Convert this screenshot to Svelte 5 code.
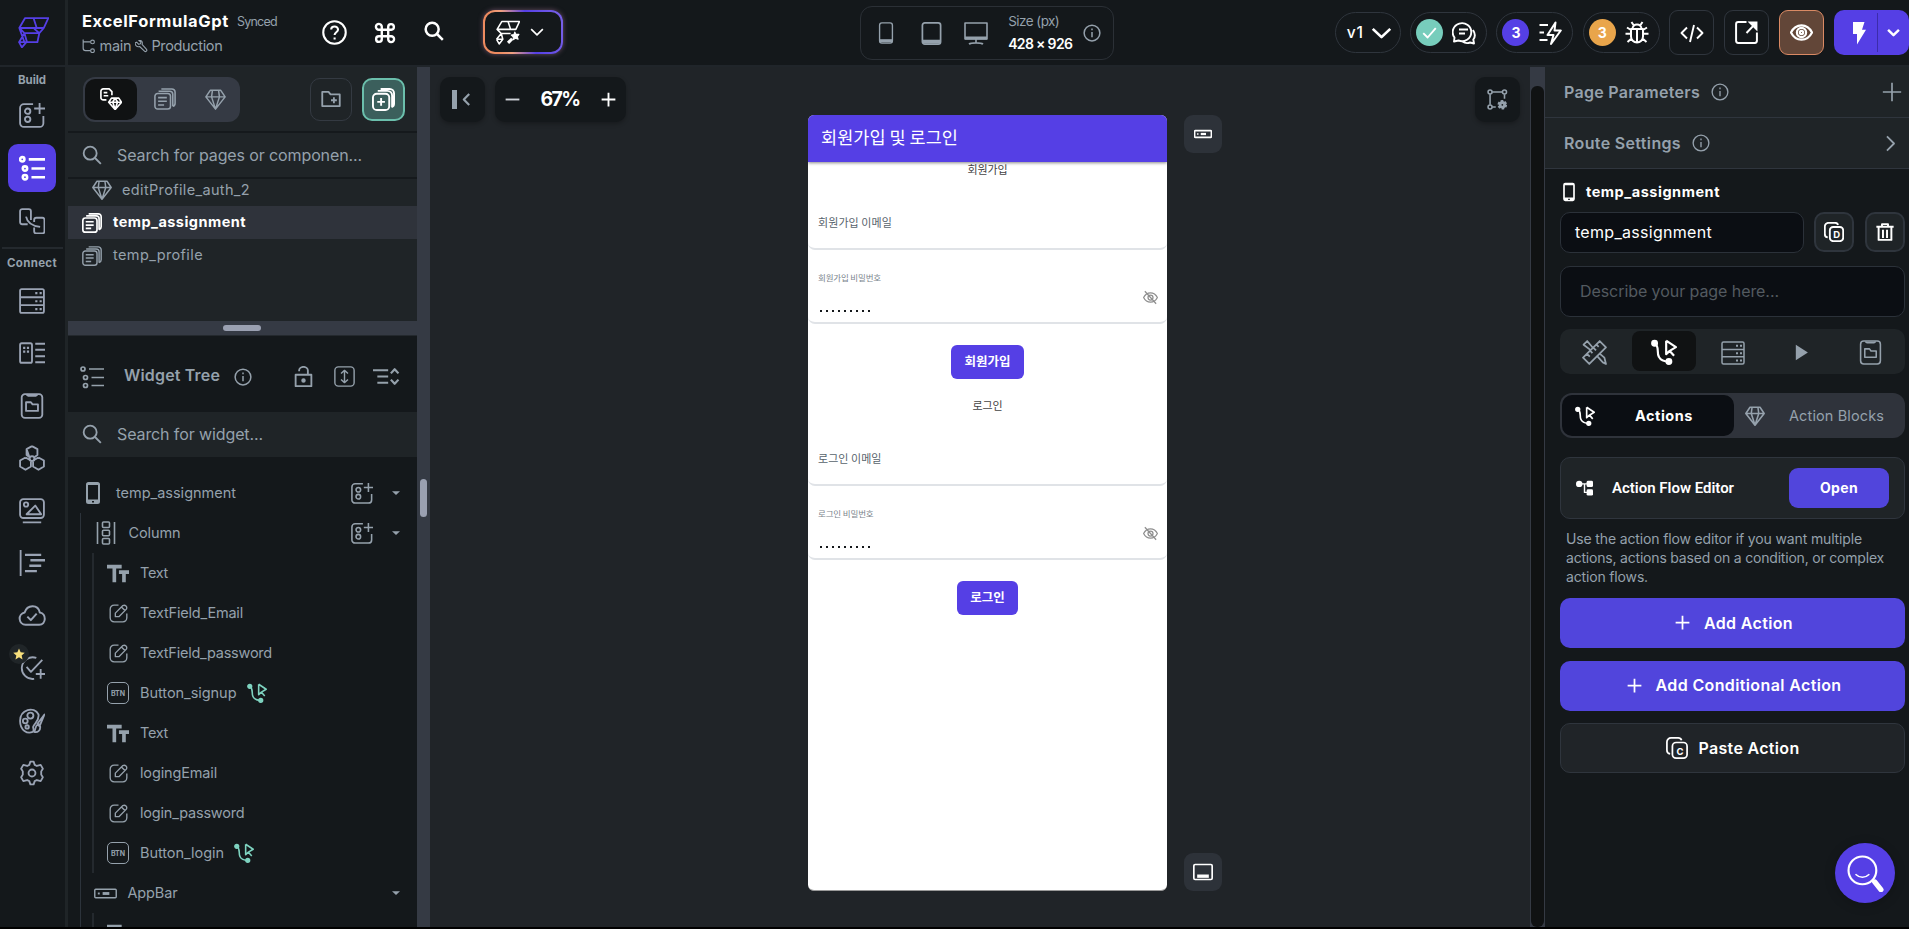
<script>
  // Spreads a label over a given width by adjusting its tracking.
  function fit(node, width) {
    const natural = node.getBoundingClientRect().width;
    const count = [...node.textContent].length;
    node.style.letterSpacing = (width - natural) / count + 'px';
  }

  const icons = {
    logo: '<path d="M5.500.800h18L20 8.500H1zM12 .800l2.500 7.700M1 8.500l4 4h11.500l-1.500 7H5zM12.500 9l4 3.500M20 8.500l-3.500 4M5 12.500L.800 19.500 3 23.500l3.500-4M5 12.500l2 7M.800 19.500H5"/>',
    branch: '<path d="M2 1v15a4 4 0 0 0 4 4h8M2 5h12"/><circle cx="18" cy="5" r="3.200"/><circle cx="18" cy="20" r="3.200"/>',
    wrench: '<path d="M3 4l4 4 3-1 1-3-4-3c4-1 8 2 6 7l8 9a2.300 2.300 0 0 1-3.500 3.500l-9-8.500c-5 2-9-3-8-7z"/>',
    help: '<circle cx="12" cy="12" r="10.800"/><path d="M8.800 9.200c0-4 6.600-4 6.600 0 0 2.600-3.300 2.600-3.300 5.200M12.100 16.800v1.800"/>',
    cmd: '<path d="M8.500 8.500h7v7h-7zM8.500 8.500v-3a3.200 3.200 0 1 0-3.200 3h3.200M15.500 8.500h3.200a3.100 3.100 0 1 0-3.200-3v3M15.500 15.500v3a3.200 3.200 0 1 0 3.200-3h-3.200M8.500 15.500H5.300a3.100 3.100 0 1 0 3.200 3z"/>',
    search: '<circle cx="9.800" cy="9.800" r="7.800"/><path d="M15.600 15.600l7 7"/>',
    wand: '<path d="M6.500 1.500h17L20 9H2zM12.500 1.500L15 9M2 9l4 4h9M6 13l-4.500 5.500M1.500 18.500L4 23l3.500-4.500M6 13l1.500 5.500h-6"/><path d="M12.500 22l4-4" stroke-width="3"/><path d="M19 11.500l1.200 2.300 2.800 0-1.600 2.100.8 2.600-2.500-.9-2.300 1.300.1-2.700-1.900-1.700 2.600-.6z" fill="currentColor" stroke-width="1"/>',
    down: '<path d="M2 7l10 10L22 7"/>',
    right: '<path d="M7 2l10 10L7 22"/>',
    left: '<path d="M17 2L7 12l10 10"/>',
    phoneOutline: '<rect x="5" y="1" width="14" height="22" rx="2.500"/><path d="M5 20.500h14" stroke-width="3.500"/>',
    tablet: '<rect x="2.500" y="1" width="19" height="22" rx="2.500"/><path d="M3 20.500h18" stroke-width="4"/>',
    monitor: '<path d="M1 2h22v16H1z"/><path d="M1 17h22" stroke-width="3"/><path d="M12 18v4M5 23.200c2-1.800 12-1.800 14 0"/>',
    info: '<circle cx="12" cy="12" r="10.500"/><path d="M12 10.500v7M12 6v2.200"/>',
    check: '<path d="M2 13l7 7L22 5"/>',
    chat: '<path d="M2.500 16.500A9.300 9 0 1 1 6.500 19.500L2 20.500zM7 8.500h9M7 12.500h6M21 9c2.700 4 1.800 7.500.3 9.500l.7 4-4-1c-2.500 1-5.500.5-7.500-1"/>',
    fast: '<path d="M17.500 1.500L9.500 14h6l-2.500 9 9.800-13.500h-6.300zM1.500 4h8.500M1.500 11.500h4.500M1.500 19h8"/>',
    bug: '<path d="M6 8h12v7.500a6 6 0 0 1-12 0zM12 8v13.500M7.500 8c0-6 9-6 9 0M8.500 4L6.500 1M15.500 4l2-3M6 12.800H.5M23.500 12.800H18M6 9L2 6.500M18 9l4-2.500M6.500 17.500L2.500 21M17.500 17.500l4 3.500"/>',
    code: '<path d="M7 6.500L1.500 12 7 17.500M17 6.500L22.500 12 17 17.500M14 4l-4 17"/>',
    external: '<path d="M12 2H4a2 2 0 0 0-2 2v16a2 2 0 0 0 2 2h16a2 2 0 0 0 2-2v-8M12 12.500L21 3"/><path d="M13 1.500h9.500V11z" fill="currentColor" stroke="none"/>',
    eye: '<path d="M1 12c5-10 17-10 22 0-5 10-17 10-22 0z"/><circle cx="12" cy="12" r="4.800"/><circle cx="12" cy="12" r="1.700"/>',
    bolt: '<path d="M6 1h11.500L15 8.800h4L10 23.500V13H6z" fill="currentColor" stroke="none"/>',
    addWidget: '<path d="M13 2H4.500A3.500 3.500 0 0 0 1 5.500v14A3.500 3.500 0 0 0 4.500 23H19a3.500 3.500 0 0 0 3.500-3.500V13M19 1v10M14 6h10"/><circle cx="8" cy="8.500" r="2.500"/><circle cx="8" cy="16" r="2.500"/>',
    tree: '<circle cx="3" cy="4" r="2"/><circle cx="5.500" cy="12.500" r="2"/><circle cx="5.500" cy="20.500" r="2"/><path d="M9 4h15M11.500 12.500H24M11.500 20.500H24"/>',
    flowPages: '<path d="M11 11V3a2 2 0 0 0-2-2H3a2 2 0 0 0-2 2v10a2 2 0 0 0 2 2h5M14 13v-2a2 2 0 0 1 2-2h5.500a2 2 0 0 1 2 2v10.500a2 2 0 0 1-2 2H16a2 2 0 0 1-2-2V18M6.500 8c1 5 4.500 8.500 13 9.500"/>',
    server: '<rect x="1" y="1" width="22" height="22" rx="1.500"/><path d="M1 8.500h22M1 15.800h22"/><path d="M15 4.800h2M19 4.800h2M15 12.200h2M19 12.200h2M15 19.500h2M19 19.500h2" stroke-width="2"/>',
    apiTable: '<rect x="1" y="3" width="11" height="18" rx="1.500"/><path d="M15 3.500h9M15 9h9M15 15h9M15 20.500h9"/><path d="M3.800 7.200h2M7.300 7.200h2M3.800 10.800h2M7.300 10.800h2" stroke-width="2"/>',
    clip: '<rect x="2.500" y="1" width="19" height="22" rx="3"/><path d="M7 1.500l1.500 1h7l1.500-1M6.500 8.500h4.500l1.500 2h5v6h-11z"/>',
    hexes: '<path d="M12 1l5 2.800v5.500L14.500 11M9.500 11L7 9.300V3.800zM7 3.800L12 1M6 11.500l4.500 2.500M6 11.500L1 14.300v5.500L6 22.800l5-3v-4.500M18 11.500l-4.500 2.500M18 11.500l5 2.800v5.500l-5 3-5-3v-4.500"/><circle cx="12" cy="12.600" r="2.200"/>',
    image: '<rect x="1" y="1" width="22" height="17.500" rx="3"/><circle cx="6.500" cy="6" r="2"/><path d="M7 15l8-8 5.500 8zM3.500 22.500h17"/>',
    lines: '<path d="M1.500 0v24"/><path d="M5.500 4.500h15M10.500 9.500H24M9.500 14.500h11M5.500 19.500h11" stroke-width="2.200"/>',
    cloud: '<path d="M6.500 19.500a5.300 5.300 0 0 1-.8-10.500c2-7 11.500-7.500 13 0 6 1 5.500 10.500-.5 10.500zM8 12.500l3 3 5-5.500"/>',
    checkPlus: '<path d="M14 22a10 10 0 1 1 2-19.300M7 11l4 4.500L21.500 4.500M20 13v9M15.500 17.500h9"/>',
    palette: '<path d="M18 6C14-2 1 1 1 12c0 9 7 12 11.500 10 2-1 .5-3 .5-4.500C14 14 19 12 18 6z"/><circle cx="10.500" cy="7" r="2.800"/><circle cx="5.800" cy="12" r="2.200"/><circle cx="7.500" cy="17.500" r="1.600"/><path d="M23.500 6l-4 9.500-2.500-1zM17 15.500c-2 1-1.500 4-3 6.500 3 1 6-1 5.500-5z"/>',
    gear: '<path d="M9.500 4.500L10.500 1.500h3l1 3 2 1 3.500-1 2 3.500-1.500 2.500v3l1.500 2.500-2 3.500-3.500-1-2 1-1 3h-3l-1-3-2-1-3.500 1-2-3.500L3.500 13.500v-3L2 8l2-3.500 3.500 1z"/><circle cx="12" cy="12" r="3.200"/>',
    pages: '<rect x="1" y="6" width="17" height="17" rx="3"/><path d="M5 3.500h12a3.500 3.500 0 0 1 3.500 3.500v13M8 1h11.500A3.500 3.500 0 0 1 23 4.500v12c0 2-.8 3-2.500 3.500M4.500 10.500H14M4.500 14.500h9.500M4.500 18.500h6.500"/>',
    pagesAdd: '<rect x="1" y="6" width="17" height="17" rx="4"/><path d="M6 3h10a5 5 0 0 1 5 5v12M9 1h9.500A4.500 4.500 0 0 1 23 5.500v11c0 2-1 3-2.500 3.500M9.500 10.500v8M5.500 14.500h8"/>',
    diamond: '<path d="M6 1.500h12l5 7.500L12 23 1 9zM1 9h22M8.500 1.500L7.500 9 12 23l4.500-14-1-7.500"/>',
    pageDiamond: '<path d="M7 13H3.500A2.500 2.500 0 0 1 1 10.500v-7A2.500 2.500 0 0 1 3.500 1h6.500l3 3v4M4 5h4M4 8.500h5"/><path d="M12.500 11h8l3 4.500-7 8-7-8zM9.500 15.500h14M14 15.500l2.500 8 2.500-8M14 15l2.500-4 2.500 4"/>',
    folderAdd: '<path d="M1.500 3.500h7.500l2.500 3h11v14h-21zM15.500 10v7M12 13.500h7"/>',
    lock: '<path d="M3 10h18v13H3zM7 6V5a5 4 0 0 1 10 0v5"/><circle cx="12" cy="16.500" r="1.500" fill="currentColor"/>',
    updown: '<rect x="1" y="1" width="22" height="22" rx="4"/><path d="M12 5v14M8 8.500L12 5l4 3.500M8 15.500l4 3.500 4-3.500"/>',
    collapse: '<path d="M0 6h14M4 12h10M4 18h10M16.500 9L20 5l3.500 4M16.500 15l3.500 4 3.500-4"/>',
    phone: '<path d="M7.500 1h9a2.500 2.500 0 0 1 2.500 2.500v17A2.500 2.500 0 0 1 16.500 23h-9A2.500 2.500 0 0 1 5 20.500v-17A2.500 2.500 0 0 1 7.500 1zM7 4v14.500h10V4zM11 20v1.500h2V20z" fill="currentColor" fill-rule="evenodd" stroke="none"/>',
    column: '<path d="M3.500 1v22M20.500 1v22"/><rect x="8.500" y="1" width="7" height="5.500" rx="1"/><rect x="8.500" y="9.200" width="7" height="5.500" rx="1"/><rect x="8.500" y="17.500" width="7" height="5.500" rx="1"/>',
    text: '<path d="M0 3h16v4h-6v15H6V7H0zM13 9h11v4h-3.500v9h-4v-9H13z" fill="currentColor" stroke="none"/>',
    edit: '<path d="M12 1.500H6.500A5 5 0 0 0 1.500 6.500v11a5 5 0 0 0 5 5h11a5 5 0 0 0 5-5V12M8 16v-4.500l9.500-9.500c3-1.500 6 1.500 4.500 4.500L12.500 16zM16 4l4.500 4.500"/>',
    flow: '<circle cx="3.300" cy="4" r="2.200" fill="currentColor"/><circle cx="16.500" cy="20.800" r="2.200" fill="currentColor"/><path d="M3.300 4c5 3 1.500 8 4 12.500 1.500 3 4 4.300 9.200 4.300M14 1.500V14l3.300-3 4 4.500M14 1.500l9 6-5.700 3.500"/>',
    appbar: '<rect x="0.800" y="7.500" width="22.400" height="9" rx="1"/><path d="M9 12h7" stroke-width="3"/><path d="M4 12h2" stroke-width="2"/>',
    navbar: '<rect x="1" y="3" width="22" height="18" rx="1.500"/><path d="M5 17h14" stroke-width="4"/>',
    caret: '<path d="M0 6.500h24L12 18z" fill="currentColor" stroke="none"/>',
    bounds: '<circle cx="3.500" cy="3.500" r="2.300"/><circle cx="20" cy="3.500" r="2.300"/><circle cx="3.500" cy="20.500" r="2.300"/><path d="M6 3.500h11.500M3.500 6v12M6 20.500h4M20 6v5"/><circle cx="17.500" cy="18" r="4.200" fill="currentColor" stroke-width="2.600" stroke-dasharray="2.700 1.700"/><circle cx="17.500" cy="18" r="1" fill="#14181b" stroke="none"/>',
    plus: '<path d="M12 1v22M1 12h22"/>',
    minus: '<path d="M1 12h22"/>',
    eyeOff: '<path d="M1 12c5-10 17-10 22 0-5 10-17 10-22 0z"/><circle cx="12" cy="12" r="4"/><path d="M3 2l18 20"/>',
    copy: '<rect x="7" y="6" width="16" height="17" rx="4"/><path d="M4.500 18.500A4 4 0 0 1 1 14.500v-9A4.500 4.500 0 0 1 5.500 1H13a4 4 0 0 1 4 2.500"/>',
    trash: '<path d="M0.500 5h23M8 4.500V1.500h8V4.500M3.500 6v16.500h17V6M9.300 9v11M14.700 9v11"/>',
    ruler: '<path d="M17 1l6 6L7 23l-6-6zM14 4.500l2 2M11 7.500l2.500 2.500M8 10.500l2 2M5 13.500l2.500 2.500M8 9.500L1.500 4.500 5 1l5 6M15 16l5 5.500 3 1.500-1.500-6-4-3.500"/>',
    play: '<path d="M4 1l17 11L4 23z" fill="currentColor" stroke="none"/>',
    nodes: '<path d="M4 5.500h8v12h5M12 5.500h6"/><circle cx="4.500" cy="5.500" r="4.500" fill="currentColor" stroke="none"/><rect x="15" y="1" width="9" height="9" rx="2" fill="currentColor" stroke="none"/><rect x="15" y="13" width="9" height="9" rx="2" fill="currentColor" stroke="none"/>',
    star: '<path d="M12 1l3.300 7.500 8.200.8-6.200 5.500 1.800 8L12 18.500l-7.100 4.300 1.800-8L.5 9.300l8.200-.8z" fill="currentColor" stroke="none"/>',
    smile: '<circle cx="10" cy="10" r="9"/><path d="M5.500 12.500c2.500 2.500 6.500 2.500 9 0" stroke-width="1"/><path d="M16.500 16.500l1.500 1.500"/><path d="M18 17.500l4 5" stroke-width="3.400" stroke-linecap="round"/>'
  };

  const build = ['addWidget', 'tree', 'flowPages'];
  const connect = ['server', 'apiTable', 'clip', 'hexes', 'image', 'lines', 'cloud', 'checkPlus', 'palette', 'gear'];
  const leaves = [
    { icon: 'text', label: 'Text', w: 28 },
    { icon: 'edit', label: 'TextField_Email', w: 103 },
    { icon: 'edit', label: 'TextField_password', w: 132 },
    { icon: 'btn', label: 'Button_signup', w: 96.500, flow: true },
    { icon: 'text', label: 'Text', w: 28 },
    { icon: 'edit', label: 'logingEmail', w: 77 },
    { icon: 'edit', label: 'login_password', w: 104.500 },
    { icon: 'btn', label: 'Button_login', w: 84, flow: true }
  ];
  const forms = [
    { title: '회원가입', email: '회원가입 이메일', ew: 74, pass: '회원가입 비밀번호', pw: 63, tw: 40, bw: 73, lw: 46 },
    { title: '로그인', email: '로그인 이메일', ew: 63.500, pass: '로그인 비밀번호', pw: 55.500, tw: 30, bw: 61, lw: 34.500 }
  ];
</script>

{#snippet icon(name, size, sw = 2, h = size)}
  <svg width={size} height={h} viewBox="0 0 24 24" preserveAspectRatio={h === size ? 'xMidYMid' : 'none'} fill="none" stroke="currentColor" stroke-width={sw} stroke-linejoin="round">{@html icons[name]}</svg>
{/snippet}

<div class="app">
  <header>
    <div class="brand">{@render icon('logo', 31, 1.400)}</div>
    <div class="project">
      <div class="line1"><b use:fit={147}>ExcelFormulaGpt</b><span use:fit={40}>Synced</span></div>
      <div class="line2">{@render icon('branch', 14, 2)}<span use:fit={32}>main</span>{@render icon('wrench', 13, 2)}<span use:fit={71}>Production</span></div>
    </div>
    <div class="tools">
      {@render icon('help', 25, 2)}
      {@render icon('cmd', 22, 2.600)}
      {@render icon('search', 20, 3)}
    </div>
    <div class="ai">{@render icon('wand', 25, 1.500)}{@render icon('down', 14, 2.800)}</div>
    <div class="sizes">
      {@render icon('phoneOutline', 22, 1.500)}
      {@render icon('tablet', 23, 1.800)}
      {@render icon('monitor', 24, 1.600)}
      <div class="dims"><span use:fit={51}>Size (px)</span><b use:fit={64}>428 × 926</b></div>
      {@render icon('info', 18, 2)}
    </div>
    <div class="right">
      <div class="pill v"><span use:fit={17}>v1</span>{@render icon('down', 21, 3, 20)}</div>
      <div class="pill"><i class="dot teal">{@render icon('check', 15, 3)}</i>{@render icon('chat', 24, 1.900)}</div>
      <div class="pill"><i class="dot violet">3</i>{@render icon('fast', 24, 2)}</div>
      <div class="pill"><i class="dot amber">3</i>{@render icon('bug', 24, 2)}</div>
      <div class="sq first">{@render icon('code', 24, 1.900)}</div>
      <div class="sq">{@render icon('external', 25, 1.900)}</div>
      <div class="sq view">{@render icon('eye', 23, 2.300)}</div>
      <div class="run"><span>{@render icon('bolt', 24)}</span><em></em><span class="more">{@render icon('down', 13, 4.500)}</span></div>
    </div>
  </header>

  <main>
    <nav>
      <div class="cap"><span use:fit={28}>Build</span></div>
      {#each build as b, i}
        <div class="cell b"><span class:active={i === 1}>{@render icon(b, 26, i === 1 ? 2.400 : 1.700)}</span></div>
      {/each}
      <div class="rule"></div>
      <div class="cap c"><span use:fit={50}>Connect</span></div>
      {#each connect as c}
        <div class="cell">
          {@render icon(c, c === 'cloud' ? 28 : 26, 1.700)}
          {#if c === 'checkPlus'}<i class="star">{@render icon('star', 12)}</i>{/if}
        </div>
      {/each}
    </nav>

    <aside>
      <div class="ptools">
        <div class="seg">
          <span class="on">{@render icon('pageDiamond', 22, 1.800)}</span>
          <span>{@render icon('pages', 22, 1.700)}</span>
          <span class="last">{@render icon('diamond', 21, 1.700)}</span>
        </div>
        <div class="ib">{@render icon('folderAdd', 20, 2.200)}</div>
        <div class="ib green">{@render icon('pagesAdd', 23, 2)}</div>
      </div>
      <div class="psearch">{@render icon('search', 20, 2.200)}<span use:fit={245}>Search for pages or componen...</span></div>
      <div class="plist">
        <div class="prow sub">{@render icon('diamond', 20, 1.800)}<span use:fit={128}>editProfile_auth_2</span></div>
        <div class="prow sel">{@render icon('pages', 20, 2)}<span use:fit={133}>temp_assignment</span></div>
        <div class="prow">{@render icon('pages', 20, 1.700)}<span use:fit={90}>temp_profile</span></div>
      </div>
      <div class="hsplit"><i></i></div>
      <div class="whead">
        {@render icon('tree', 24, 1.700)}<b use:fit={96}>Widget Tree</b>{@render icon('info', 18, 2)}
        <div class="wtools">{@render icon('lock', 21, 2.100)}{@render icon('updown', 21, 1.600)}{@render icon('collapse', 26, 2, 25)}</div>
      </div>
      <div class="wsearch">{@render icon('search', 20, 2.200)}<span use:fit={146}>Search for widget...</span></div>
      <div class="wtree">
        <div class="trow">{@render icon('phone', 24)}<span use:fit={120}>temp_assignment</span><div class="act">{@render icon('addWidget', 22, 1.700)}{@render icon('caret', 8)}</div></div>
        <div class="kids">
          <div class="trow k">{@render icon('column', 24, 1.600)}<span use:fit={52}>Column</span><div class="act">{@render icon('addWidget', 22, 1.700)}{@render icon('caret', 8)}</div></div>
          <div class="kids inner">
            {#each leaves as l}
              <div class="trow leaf">
                <span class="li">
                  {#if l.icon === 'btn'}<i class="btn">BTN</i>{:else}{@render icon(l.icon, l.icon === 'text' ? 22 : 19, 1.700)}{/if}
                </span>
                <span use:fit={l.w}>{l.label}</span>
                {#if l.flow}<i class="fl">{@render icon('flow', 20, 1.900)}</i>{/if}
              </div>
            {/each}
          </div>
          <div class="trow k">{@render icon('appbar', 23, 1.500)}<span use:fit={50}>AppBar</span><div class="act">{@render icon('caret', 8)}</div></div>
          <div class="kids inner"><div class="trow leaf"><span class="li">{@render icon('text', 22)}</span></div></div>
        </div>
      </div>
    </aside>
    <div class="gutter"><i></i></div>

    <section class="canvas">
      <div class="cbar">
        <div class="cbtn"><i class="bar"></i>{@render icon('left', 13, 4)}</div>
        <div class="zoom">{@render icon('minus', 15, 3)}<b use:fit={39}>67%</b>{@render icon('plus', 15, 3)}</div>
        <div class="cbtn end">{@render icon('bounds', 21, 1.800)}</div>
      </div>
      <div class="stage">
        <div class="device">
          <div class="dbar"><span use:fit={137}>회원가입 및 로그인</span></div>
          {#each forms as f, i}
            <div class="ftitle" class:second={i === 1}><span use:fit={f.tw}>{f.title}</span></div>
            <div class="field"><span use:fit={f.ew}>{f.email}</span></div>
            <div class="field pass">
              <div><span use:fit={f.pw}>{f.pass}</span><div class="dots">{#each Array(9) as _}<i></i>{/each}</div></div>
              {@render icon('eyeOff', 15, 2)}
            </div>
            <div class="dbtn" style="width:{f.bw}px"><span use:fit={f.lw}>{f.title}</span></div>
          {/each}
        </div>
        <div class="side"><span>{@render icon('appbar', 18, 2.200)}</span><span>{@render icon('navbar', 20, 2)}</span></div>
      </div>
    </section>
    <div class="scroll"><i></i></div>

    <section class="props">
      <div class="phead"><b use:fit={136}>Page Parameters</b>{@render icon('info', 18, 1.800)}<em>{@render icon('plus', 20, 2)}</em></div>
      <div class="phead"><b use:fit={117}>Route Settings</b>{@render icon('info', 18, 1.800)}<em class="chev">{@render icon('right', 17, 2.500)}</em></div>
      <div class="pbody">
        <div class="pname">{@render icon('phone', 20)}<b use:fit={134}>temp_assignment</b></div>
        <div class="prow2">
          <div class="input"><span use:fit={137}>temp_assignment</span></div>
          <div class="pb"><i class="cp">{@render icon('copy', 20, 2.200)}<small>D</small></i></div>
          <div class="pb">{@render icon('trash', 18, 2.600)}</div>
        </div>
        <div class="desc"><span use:fit={199}>Describe your page here...</span></div>
        <div class="tabs">
          <span>{@render icon('ruler', 25, 1.700)}</span>
          <span class="on">{@render icon('flow', 26, 2)}</span>
          <span>{@render icon('server', 24, 1.500)}</span>
          <span>{@render icon('play', 17)}</span>
          <span>{@render icon('clip', 25, 1.500)}</span>
        </div>
        <div class="switch">
          <div class="on">{@render icon('flow', 20, 2)}<b use:fit={58}>Actions</b></div>
          <div class="off">{@render icon('diamond', 20, 1.900)}<span use:fit={95}>Action Blocks</span></div>
        </div>
        <div class="card">{@render icon('nodes', 17, 2)}<b use:fit={122}>Action Flow Editor</b><div class="open"><span use:fit={38}>Open</span></div></div>
        <div class="hint"><span use:fit={296}>Use the action flow editor if you want multiple</span><br /><span use:fit={318}>actions, actions based on a condition, or complex</span><br /><span use:fit={82}>action flows.</span></div>
        <div class="big">{@render icon('plus', 15, 2.800)}<span use:fit={89}>Add Action</span></div>
        <div class="big">{@render icon('plus', 15, 2.800)}<span use:fit={186}>Add Conditional Action</span></div>
        <div class="big paste"><i class="cp">{@render icon('copy', 22, 1.900)}<small>C</small></i><span use:fit={101}>Paste Action</span></div>
      </div>
      <div class="fab">{@render icon('smile', 37, 1.400)}</div>
    </section>
  </main>
</div>

<style>
  :global(body) { margin: 0; background: #000; overflow: hidden; }
  .app { width: 1909px; height: 929px; overflow: hidden; background: #000; color: #95a1ac; font-family: Inter, "Noto Sans CJK KR", sans-serif; font-size: 14px; line-height: 1; white-space: nowrap; }
  .app * { box-sizing: border-box; }
  .app :global(svg) { display: block; flex: none; }
  i, em { font-style: normal; }
  header { height: 67px; display: flex; background: #14181b; border-bottom: 2px solid #20252a; color: #fff; }
  .brand { width: 68px; border-right: 3px solid #1f2427; padding: 17px 0 0 18px; color: #553fe5; }
  .project { width: 214px; margin-left: 14px; padding-top: 12px; }
  .line1 { display: flex; align-items: center; gap: 8px; height: 19px; }
  .line1 b { font-size: 16.500px; }
  .line1 span { font-size: 12.500px; color: #95a1ac; padding-top: 2px; }
  .line2 { display: flex; align-items: center; gap: 3.500px; height: 18px; margin-top: 6px; color: #95a1ac; font-size: 14.500px; }
  .tools { width: 140px; margin-left: 26px; display: flex; align-items: center; gap: 27px; }
  .tools :global(svg:nth-child(3)) { margin-left: 1px; margin-top: -3px; }
  .ai { width: 80px; height: 44px; margin: 10px 0 0 22px; border-radius: 12px; border: 2px solid transparent; background: linear-gradient(#14181b, #14181b) padding-box, linear-gradient(75deg, #ee8b60 18%, #f0a080 32%, #553fe5 58%, #7b63e8) border-box; box-shadow: 0 0 5px #a9749a90; display: flex; align-items: center; gap: 10px; padding-left: 10px; }
  .sizes { width: 254px; height: 54px; margin: 6px 0 0 297px; border: 1.500px solid #2b3036; border-radius: 12px; display: flex; align-items: center; color: #95a1ac; padding-left: 14px; }
  .sizes :global(svg:nth-child(2)) { margin-left: 23px; }
  .sizes :global(svg:nth-child(3)) { margin-left: 21px; }
  .dims { margin-left: 20px; width: 75px; display: flex; flex-direction: column; gap: 8px; font-size: 13.500px; }
  .dims :global(*) { align-self: flex-start; }
  .dims b { color: #fff; font-weight: 600; font-size: 14px; }
  .right { display: flex; margin-left: 221px; padding-top: 10px; }
  .pill { width: 77px; height: 41px; margin: 2px 9.300px 0 0; border: 1.500px solid #2f353d; border-radius: 21px; display: flex; align-items: center; gap: 9px; padding-left: 5px; }
  .pill.v { width: 66px; padding-left: 11px; gap: 7px; font-size: 15.500px; font-weight: 500; }
  .dot { width: 27px; height: 27px; border-radius: 50%; display: grid; place-items: center; font: 700 14px Inter, sans-serif; }
  .teal { background: #77cdbc; }
  .violet { background: #553fe5; }
  .amber { background: #e9a54b; }
  .sq { width: 45px; height: 45px; margin-right: 10px; border: 1.500px solid #2f353d; border-radius: 9px; display: grid; place-items: center; }
  .view { background: #624638; border-color: #da8a64; }
  .run { width: 75px; height: 45px; background: #553fe5; border-radius: 10px; display: flex; align-items: center; padding-left: 13px; }
  .run em { width: 1px; height: 39px; background: #3c2cab; margin: 0 9px 0 6px; }

  main { display: flex; height: 860px; }
  nav { width: 68px; flex: none; background: #14181b; border-right: 3px solid #1f2427; color: #9aa3b4; padding-right: 1px; }
  .cap { height: 22px; display: grid; place-items: center; font-size: 11.500px; font-weight: 700; color: #95a1ac; }
  .cap :global(span) { margin-top: 5px; }
  .cap.c { height: 25px; }
  .cap.c :global(span) { margin-top: 3px; }
  .cell { height: 52.500px; display: grid; place-items: center; position: relative; }
  .cell.b { height: 52.800px; }
  .cell span { width: 48px; height: 48px; display: grid; place-items: center; }
  .active { background: #553fe5; border-radius: 10px; color: #fff; }
  .rule { height: 2px; background: #24292e; margin: 0 1px 0 2px; }
  .star { position: absolute; left: 9px; top: 2px; width: 20px; height: 20px; border-radius: 50%; background: #202528; color: #f7df7c; display: grid; place-items: center; }

  aside { width: 349px; flex: none; background: #1f2427; display: flex; flex-direction: column; overflow: hidden; }
  .ptools { height: 66px; flex: none; border-bottom: 2px solid #15191c; display: flex; align-items: center; padding-left: 15px; }
  .seg { width: 157px; height: 45px; background: #353a44; border-radius: 12px; display: flex; padding: 2px; margin-right: 70px; }
  .seg span { width: 52px; display: grid; place-items: center; }
  .seg .on { background: #101213; border-radius: 10px; color: #fff; }
  .seg span:nth-child(2) { padding-left: 4px; }
  .seg .last { width: 49px; padding-left: 3px; }
  .ib { width: 42px; height: 43px; border: 1.500px solid #343a42; border-radius: 10px; display: grid; place-items: center; margin-right: 10px; }
  .ib.green { width: 43px; background: #3b5f5c; border: 2px solid #6bbfac; color: #fff; margin: 0; }
  .psearch { height: 46px; flex: none; border-bottom: 2px solid #15191c; display: flex; align-items: center; padding-left: 14px; gap: 15px; font-size: 16px; }
  .plist { height: 142px; flex: none; }
  .prow { height: 33px; display: flex; align-items: center; gap: 11px; padding-left: 14px; font-size: 14.500px; }
  .prow.sub { height: 27px; padding: 0 0 5px 24px; gap: 10px; }
  .prow.sel { background: #2f333b; color: #fff; font-weight: 700; }
  .hsplit { height: 15px; flex: none; background: #353a44; display: grid; place-items: center; border-bottom: 1px solid #24292e; }
  .hsplit i { width: 38px; height: 6px; border-radius: 3px; background: #9aa0b1; margin-right: 2px; }
  .whead { height: 76px; flex: none; background: #14181b; display: flex; align-items: center; padding: 5px 18px 0 12px; }
  .whead b { font-size: 16px; font-weight: 600; margin: -3px 14px 0 20px; }
  .wtools { margin-left: auto; display: flex; align-items: center; gap: 20px; }
  .wtools :global(svg:last-child) { overflow: visible; margin-left: -2px; }
  .wsearch { height: 45px; flex: none; display: flex; align-items: center; gap: 15px; padding: 0 0 2px 14px; font-size: 16px; }
  .wtree { flex: 1; background: #14181b; padding: 16px 0 0 12px; overflow: hidden; }
  .trow { height: 40px; display: flex; align-items: center; font-size: 14.500px; padding-left: 1px; gap: 11px; }
  .act { margin-left: auto; display: flex; align-items: center; gap: 19px; padding-right: 17px; }
  .kids { border-left: 1.500px solid #2c333b; }
  .kids.inner { margin-left: 11px; border-left: 2px solid #24292e; }
  .trow.k { padding-left: 13px; gap: 10.500px; }
  .trow.leaf { padding-left: 13px; gap: 11px; }
  .li { width: 22px; display: grid; place-items: center; }
  .btn { width: 22px; height: 22px; border: 1.500px solid #95a1ac; border-radius: 5px; display: grid; place-items: center; font-size: 7px; font-weight: 700; }
  .fl { color: #7ed3c0; margin-left: -1px; }
  .gutter { width: 13px; flex: none; background: #353a44; display: flex; justify-content: center; }
  .gutter i { width: 7px; height: 38px; margin-top: 412px; border-radius: 4px; background: #9aa0b1; }

  .canvas { width: 1100px; flex: none; background: #202428; }
  .cbar { display: flex; padding: 10px 10px 0; gap: 10px; height: 48px; }
  .cbtn, .zoom { width: 45px; height: 45px; flex: none; border-radius: 10px; background: #14181b; display: flex; align-items: center; justify-content: center; box-shadow: 0 2px 4px #0004; }
  .bar { width: 5px; height: 19px; background: #95a1ac; margin-right: 3px; }
  .zoom { width: 131px; gap: 21px; color: #fff; padding-right: 1px; }
  .zoom b { font-size: 19.500px; }
  .zoom :global(svg:first-child) { color: #d0d4da; }
  .end { margin-left: auto; }
  .stage { display: flex; padding-left: 378px; }
  .device { width: 359px; height: 775.500px; background: #fff; border-radius: 6px; border: 0 solid #999; border-bottom-width: 1px; overflow: hidden; color: #57636c; font-family: "Noto Sans CJK KR", sans-serif; }
  .dbar { height: 47px; background: #553fe5; color: #fff; display: flex; align-items: center; padding: 0 0 3px 13px; font-size: 17.500px; font-weight: 400; box-shadow: 0 1px 3px #0007; position: relative; }
  .ftitle { height: 34px; padding-top: 1.500px; text-align: center; font-size: 11px; color: #444; }
  .ftitle.second { height: 54px; padding-top: 21.500px; }
  .field { height: 54px; border-bottom: 2px solid #e0e3e7; border-radius: 0 0 7px 7px; padding: 21px 0 0 10px; font-size: 11px; }
  .field.pass { height: 74px; padding: 23px 9px 0 10px; font-size: 8.500px; display: flex; justify-content: space-between; color: #7a848c; }
  .field.pass :global(svg) { margin-top: 17px; color: #8e8e8e; }
  .dots { display: flex; gap: 4px; padding: 28px 0 0 2px; }
  .dots i { width: 2px; height: 2px; background: #14181b; }
  .dbtn { height: 34px; margin: 20.500px auto -0.500px; border-radius: 6px; background: #553fe5; color: #fff; font-size: 12.500px; font-weight: 700; display: grid; place-items: center; }
  .side { margin-left: 17px; display: flex; flex-direction: column; justify-content: space-between; color: #fff; }
  .side span { width: 38px; height: 37.500px; border-radius: 9px; background: #2d3239; display: grid; place-items: center; }
  .scroll { width: 15px; flex: none; background: #353a44; padding: 19px 1px 0; }
  .scroll i { display: block; height: 841px; border-radius: 6px; background: #101213; }

  .props { width: 364px; flex: none; background: #14181b; position: relative; }
  .phead { height: 51px; background: #1f2427; border-bottom: 1.500px solid #2f353d; display: flex; align-items: center; padding: 0 7px 0 19px; font-size: 16px; gap: 10.500px; }
  .phead b { font-weight: 600; }
  .phead em { margin-left: auto; }
  .phead .chev { margin-right: 3px; }
  .pbody { padding: 11px 4px 0 15px; }
  .pname { height: 24px; display: flex; align-items: center; gap: 6px; color: #fff; margin-left: -1px; }
  .pname b { font-size: 14.500px; margin-left: 1px; }
  .prow2 { display: flex; justify-content: flex-start; margin-top: 8px; }
  .input { width: 244px; height: 41px; border: 1.500px solid #2b3139; border-radius: 10px; background: #0b0e13; color: #fff; font-size: 16px; display: flex; align-items: center; padding: 0 0 2px 14px; }
  .pb { width: 40px; height: 40px; margin-left: 10px; border: 2px solid #2f353d; border-radius: 10px; background: #1f2427; color: #fff; display: grid; place-items: center; }
  .pb:last-child { margin-left: 11px; }
  .cp { position: relative; display: block; color: #fff; }
  .cp small { position: absolute; right: 4px; bottom: 3px; font-size: 9.500px; line-height: 9px; font-weight: 700; }
  .desc { height: 51px; margin-top: 13px; border: 1.500px solid #2b3139; border-radius: 10px; background: #0b0e13; display: flex; align-items: center; padding: 0 0 2px 19px; font-size: 16px; color: #535a60; }
  .tabs { height: 45px; margin-top: 12px; border-radius: 10px; background: #1f2427; display: flex; padding: 2px 0; }
  .tabs span { flex: 1; display: grid; place-items: center; padding-top: 2px; }
  .tabs .on { flex: none; width: 64px; margin: 0 3px; height: 40px; background: #101213; border-radius: 8px; color: #fff; }
  .switch { height: 45px; margin-top: 19px; border-radius: 12px; background: #2f333b; display: flex; padding: 2px; }
  .switch div { display: flex; align-items: center; }
  .switch .on { width: 172px; background: #0b0e13; border-radius: 10px; color: #fff; padding: 1px 0 0 13px; gap: 40px; }
  .switch .off { padding: 1px 0 0 11px; gap: 24px; font-size: 14.500px; }
  .switch b { font-size: 14.500px; }
  .card { height: 62px; margin-top: 19px; border: 1.500px solid #2f353d; border-radius: 10px; background: #1f2427; display: flex; align-items: center; padding: 0 15px 0 15px; color: #fff; }
  .card b { font: 600 15px Roboto, sans-serif; margin-left: 19px; }
  .open { width: 100px; height: 40px; margin-left: auto; border-radius: 9px; background: #5145dc; display: grid; place-items: center; font-size: 14px; font-weight: 700; }
  .hint { padding: 10px 0 0 6px; height: 79px; font-size: 14px; line-height: 19px; color: #95a1ac; }
  .big { height: 50px; margin-bottom: 12.500px; border-radius: 10px; background: #5145dc; color: #fff; display: flex; align-items: center; justify-content: center; gap: 14px; font-size: 16px; font-weight: 600; padding: 0 0 1px 3px; }
  .paste { background: #202428; border: 1.500px solid #2f353d; gap: 11px; padding: 0; }
  .fab { position: absolute; left: 290px; top: 776px; width: 60px; height: 60px; border-radius: 50%; background: #553fe5; color: #fff; display: grid; place-items: center; box-shadow: 0 2px 12px #0003; }
</style>
